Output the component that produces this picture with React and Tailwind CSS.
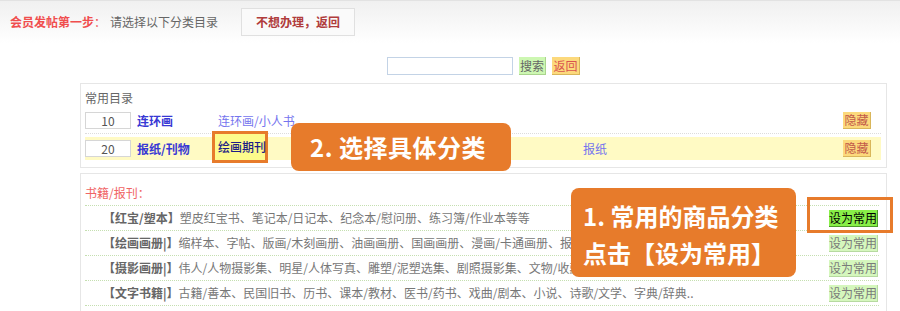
import React from "react";

const fav = [
  { num: "10", name: "连环画", subs: [{ t: "连环画/小人书" }], hl: false },
  { num: "20", name: "报纸/刊物", subs: [], hl: true },
];

const books = [
  { label: "【红宝/塑本】", text: "塑皮红宝书、笔记本/日记本、纪念本/慰问册、练习簿/作业本等等", active: true },
  { label: "【绘画画册|】", text: "缩样本、字帖、版画/木刻画册、油画画册、国画画册、漫画/卡通画册、报头" },
  { label: "【摄影画册|】", text: "伟人/人物摄影集、明星/人体写真、雕塑/泥塑选集、剧照摄影集、文物/收藏" },
  { label: "【文字书籍|】", text: "古籍/善本、民国旧书、历书、课本/教材、医书/药书、戏曲/剧本、小说、诗歌/文学、字典/辞典.." },
];

function HideBtn() {
  return (
    <span className="ml-auto mr-[10px] w-[28px] h-[17px] leading-[16px] text-center bg-[#fcd97c] border-r border-b border-[#d9b65a] text-[#c25a4a]">
      隐藏
    </span>
  );
}

export default function App() {
  return (
    <div className="relative w-[900px] h-[311px] overflow-hidden bg-white text-[12px] font-['Noto_Sans_CJK_SC',sans-serif]">
      {/* header */}
      <div className="h-[43px] border-t border-[#e2e2e2] bg-gradient-to-b from-[#f0f0f0] to-white flex items-center pl-[10px]">
        <span className="text-[#f04e4e] font-bold leading-[16px]">会员发帖第一步</span>
        <span className="text-[#f04e4e] leading-[16px]">：</span>
        <span className="ml-[4px] text-[#666] leading-[16px]">请选择以下分类目录</span>
        <button className="ml-[23px] w-[114px] h-[28px] bg-[#fafafa] border border-[#e0e0e0] text-[#b03c3c] font-bold leading-[26px]">
          不想办理，返回
        </button>
      </div>

      {/* search */}
      <div className="ml-[80px] w-[807px] mt-[14px] flex justify-center items-center gap-[6px]">
        <input className="w-[126px] h-[18px] border border-[#c3d3e6] bg-white outline-none" />
        <span className="w-[27px] h-[18px] leading-[17px] text-center bg-[#cdf7b2] border-r border-b border-[#aad48e] text-[#666]">搜索</span>
        <span className="w-[28px] h-[18px] leading-[17px] text-center bg-[#fcd97c] border-r border-b border-[#d9b65a] text-[#d9534f]">返回</span>
      </div>

      {/* favourites panel */}
      <div className="ml-[80px] mt-[8px] w-[807px] h-[85px] border border-[#e6e6e6] pl-[4px]">
        <div className="pt-[6px] leading-[16px] text-[#666]">常用目录</div>
        {fav.map((r) => (
          <div
            key={r.num}
            className={
              r.hl
                ? "mt-[3px] w-[796px] h-[23px] bg-[#fffac4] flex items-center"
                : "mt-[2px] w-[796px] h-[26px] border-b border-dotted border-[#dcdcdc] flex items-center"
            }
          >
            <span className="w-[46px] h-[17px] border border-[#d6d6d6] bg-white text-center leading-[15px] text-[#555]">
              {r.num}
            </span>
            <span className="ml-[6px] w-[81px] font-bold text-[#3838d4] leading-[16px]">{r.name}</span>
            {r.subs.map((s) => (
              <span key={s.t} className="text-[#7474ee] leading-[16px]">{s.t}</span>
            ))}
            {r.hl && (
              <>
                <span className="relative leading-[16px]">
                  <span className="absolute -left-[6px] -top-[10px] w-[56px] h-[32px] border-[3px] border-[#e77b2b] bg-[#fdfb8c]" />
                  <span className="relative -top-[2px] text-[#1d1d86] font-medium">绘画期刊</span>
                </span>
                <span className="ml-[317px] text-[#7474ee] leading-[16px]">报纸</span>
              </>
            )}
            <HideBtn />
          </div>
        ))}
      </div>

      {/* books panel */}
      <div className="ml-[80px] mt-[5px] w-[807px] h-[200px] border border-b-0 border-[#e6e6e6] pl-[4px]">
        <div className="w-[794px] pt-[11px] pb-[4px] leading-[16px] text-[#f06464] border-b border-dotted border-[#c5dfb0]">
          书籍/报刊：
        </div>
        {books.map((b) => (
          <div
            key={b.label}
            className="w-[794px] h-[25px] border-b border-dotted border-[#c5dfb0] flex items-center pl-[18px]"
          >
            <span className="font-bold text-[#666] leading-[16px] whitespace-nowrap">{b.label}</span>
            <span className="whitespace-nowrap text-[#777] leading-[16px]">{b.text}</span>
            {b.active ? (
              <span className="ml-auto mr-[1px] w-[49px] h-[17px] leading-[16px] text-center bg-[#88ef48] border-r border-b border-[#4d9a2a] text-black">
                设为常用
              </span>
            ) : (
              <span className="ml-auto mr-[1px] w-[49px] h-[17px] leading-[16px] text-center bg-[#d5f7bd] border-r border-b border-[#b6d9a0] text-[#7a7a7a]">
                设为常用
              </span>
            )}
          </div>
        ))}
      </div>

      {/* annotation overlays */}
      <div className="absolute left-[291px] top-[123px] w-[220px] h-[48px] rounded-[8px] bg-[#e77b2b] flex items-center pl-[19px] text-white font-bold text-[24px] leading-[30px] tracking-[0.5px]">
        2. 选择具体分类
      </div>
      <div className="absolute left-[571px] top-[188px] w-[225px] h-[89px] rounded-[8px] bg-[#e77b2b] flex flex-col justify-center pt-[3px] pl-[12px] text-white font-bold text-[24px] leading-[37px]">
        <span>1. 常用的商品分类</span>
        <span>点击【设为常用】</span>
      </div>
      <div className="absolute left-[807px] top-[197px] w-[86px] h-[36px] border-[3px] border-[#e77b2b]" />
    </div>
  );
}
